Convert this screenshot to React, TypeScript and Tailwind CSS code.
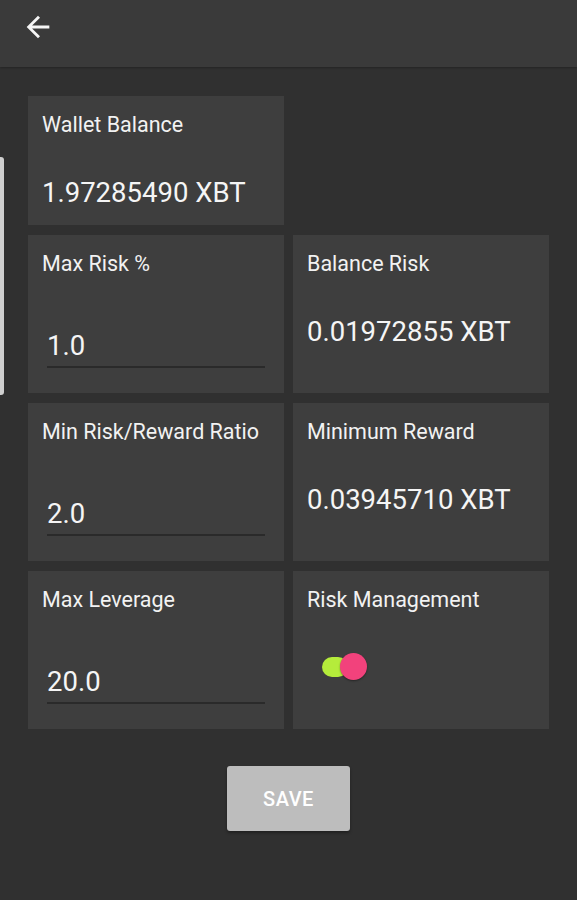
import React from "react";

const font = { fontFamily: "Roboto, 'Noto Sans', sans-serif" };

function InputCard({ label, value }: { label: string; value: string }) {
  return (
    <div className="h-[158px] bg-[#3e3e3e] pt-[16px] px-[14px] flex flex-col">
      <div className="text-[21.5px] leading-[25px] text-[#f2f2f2]">{label}</div>
      <div className="mt-[54px] mx-[5px] border-b-[2px] border-[#2a2a2a] pb-[4px]">
        <div className="text-[27.5px] leading-[32px] text-[#f5f5f5]">{value}</div>
      </div>
    </div>
  );
}

function ValueCard({ label, value }: { label: string; value: string }) {
  return (
    <div className="h-[158px] bg-[#3e3e3e] pt-[16px] px-[14px] flex flex-col">
      <div className="text-[21.5px] leading-[25px] text-[#f2f2f2]">{label}</div>
      <div className="mt-[40px] text-[27.5px] leading-[32px] text-[#f5f5f5]">{value}</div>
    </div>
  );
}

export default function App() {
  return (
    <div className="relative min-h-[900px] w-[577px] bg-[#303030]" style={font}>
      <div className="h-[67px] bg-[#3a3a3a] flex items-start pt-[10px] pl-[21px] shadow-[0_1px_2px_rgba(0,0,0,0.25)]">
        <svg width="34" height="34" viewBox="0 0 24 24" fill="#f5f5f5">
          <path d="M20 11H7.83l5.59-5.59L12 4l-8 8 8 8 1.41-1.41L7.83 13H20v-2z" />
        </svg>
      </div>

      <div className="absolute left-0 top-[157px] w-[4px] h-[238px] bg-[#cfcfcf] rounded-r-[3px]" />

      <div className="pt-[29px] pl-[28px]">
        <div className="grid grid-cols-[256px_256px] gap-x-[9px] gap-y-[10px]">
          <div className="h-[129px] bg-[#3e3e3e] pt-[16px] px-[14px] flex flex-col">
            <div className="text-[21.5px] leading-[25px] text-[#f2f2f2]">Wallet Balance</div>
            <div className="mt-[40px] text-[27.5px] leading-[32px] text-[#f5f5f5]">1.97285490 XBT</div>
          </div>
          <div />
          <InputCard label="Max Risk %" value="1.0" />
          <ValueCard label="Balance Risk" value="0.01972855 XBT" />
          <InputCard label="Min Risk/Reward Ratio" value="2.0" />
          <ValueCard label="Minimum Reward" value="0.03945710 XBT" />
          <InputCard label="Max Leverage" value="20.0" />
          <div className="h-[158px] bg-[#3e3e3e] pt-[16px] px-[14px] flex flex-col">
            <div className="text-[21.5px] leading-[25px] text-[#f2f2f2]">Risk Management</div>
            <div className="mt-[41px] ml-[15px] relative w-[45px] h-[27px]">
              <div className="absolute left-0 top-[4px] w-[26px] h-[20px] rounded-full bg-[#b5ec3b]" />
              <div className="absolute left-[18px] top-0 w-[27px] h-[27px] rounded-full bg-[#f2427c] shadow-[0_1px_2px_rgba(0,0,0,0.4)]" />
            </div>
          </div>
        </div>

        <div className="flex justify-center w-[521px] mt-[37px]">
          <button className="w-[123px] h-[65px] bg-[#bdbdbd] rounded-[3px] text-white text-[20px] font-medium tracking-[0.5px] shadow-[0_2px_3px_rgba(0,0,0,0.35)]">
            SAVE
          </button>
        </div>
      </div>
    </div>
  );
}
